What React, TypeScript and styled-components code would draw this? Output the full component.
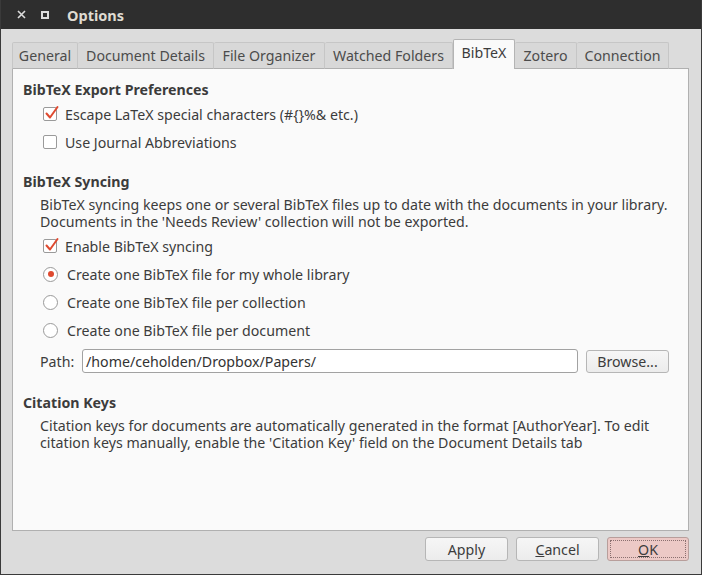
import React from "react";
import styled, { createGlobalStyle } from "styled-components";

const Global = createGlobalStyle`
  html, body { margin: 0; padding: 0; }
  body { font-family: "Noto Sans", "DejaVu Sans", sans-serif; font-size: 14.2px; color: #3c3c3c; }
  * { box-sizing: border-box; }
`;

const Frame = styled.div`
  width: 702px;
  height: 575px;
  display: flex;
  flex-direction: column;
  background: #dcdcdc;
  border-left: 1px solid #3a3a3a;
  border-right: 1px solid #3a3a3a;
  border-bottom: 1px solid #3a3a3a;
`;

const TitleBar = styled.div`
  height: 29px;
  flex: none;
  display: flex;
  align-items: center;
  background: #2e2e2e;
  color: #dfdbd2;
  padding-left: 15px;
`;

const WinButton = styled.div`
  width: 10px;
  height: 10px;
  display: flex;
  align-items: center;
  justify-content: center;
  margin-right: 14px;
`;

const Title = styled.div`
  font-weight: bold;
  font-size: 14.5px;
  margin-left: 3px;
`;

const Body = styled.div`
  flex: 1;
  display: flex;
  flex-direction: column;
  padding: 10px 12px 0 11px;
  min-height: 0;
`;

const TabBar = styled.div`
  display: flex;
  align-items: flex-end;
  height: 30px;
  margin-bottom: -1px;
  position: relative;
  z-index: 1;
`;

const Tab = styled.div<{ $w: number; $active?: boolean }>`
  width: ${(p) => p.$w}px;
  height: ${(p) => (p.$active ? 30 : 27)}px;
  display: flex;
  align-items: center;
  justify-content: center;
  white-space: nowrap;
  background: ${(p) => (p.$active ? "#fafafa" : "#d8d8d8")};
  border: 1px solid ${(p) => (p.$active ? "#b4b4b4" : "#c6c6c6")};
  border-bottom: ${(p) => (p.$active ? "none" : "1px solid #b0b0b0")};
  border-left: ${(p) => (p.$active ? "1px solid #b4b4b4" : "none")};
  border-radius: 2px 2px 0 0;
  color: ${(p) => (p.$active ? "#3c3c3c" : "#4c4c4c")};
  padding-bottom: ${(p) => (p.$active ? 4 : 1)}px;
  &:first-child { border-left: 1px solid #c6c6c6; }
`;

const Panel = styled.div`
  flex: 1;
  background: #fafafa;
  border: 1px solid #b0b0b0;
  padding: 11px 10px 0 10px;
  display: flex;
  flex-direction: column;
`;

const Heading = styled.div<{ $top?: number }>`
  font-weight: bold;
  line-height: 20px;
  margin-top: ${(p) => p.$top ?? 0}px;
`;

const Para = styled.div`
  margin: 4px 0 0 17px;
  line-height: 17px;
`;

const OptionRow = styled.label<{ $top?: number }>`
  height: 28px;
  display: flex;
  align-items: center;
  padding-left: 20px;
  gap: 8px;
  white-space: nowrap;
  margin-top: ${(p) => p.$top ?? 0}px;
`;

const Box = styled.span`
  width: 14px;
  height: 14px;
  border: 1px solid #9a9a9a;
  border-radius: 2px;
  background: #fff;
  position: relative;
  flex: none;
`;

const Check = styled.svg`
  position: absolute;
  left: 0px;
  top: -3px;
`;

const Radio = styled.span`
  width: 15px;
  height: 15px;
  border: 1px solid #9a9a9a;
  border-radius: 50%;
  background: #fff;
  display: flex;
  align-items: center;
  justify-content: center;
  flex: none;
  margin-right: 1px;
`;

const Dot = styled.span`
  width: 6px;
  height: 6px;
  border-radius: 50%;
  background: #df4a30;
`;

const PathRow = styled.div`
  display: flex;
  align-items: center;
  margin-top: 5px;
  padding-left: 17px;
  height: 24px;
`;

const PathLabel = styled.span`
  width: 42px;
  flex: none;
`;

const Input = styled.div`
  width: 496px;
  height: 24px;
  border: 1px solid #a2a2a2;
  border-radius: 3px;
  background: #fff;
  display: flex;
  align-items: center;
  padding-left: 3px;
  color: #333;
`;

const Button = styled.div<{ $w: number; $default?: boolean }>`
  width: ${(p) => p.$w}px;
  height: 24px;
  border: 1px solid ${(p) => (p.$default ? "#b89e9b" : "#b6b6b6")};
  border-radius: 3px;
  background: ${(p) =>
    p.$default ? "#ecc9c6" : "linear-gradient(#f6f6f6, #ececec)"};
  display: flex;
  align-items: center;
  justify-content: center;
  color: #3c3c3c;
  position: relative;
  flex: none;
`;

const Focus = styled.span`
  position: absolute;
  inset: 2px;
  border: 1px dotted #8a7070;
`;

const BrowseButton = styled(Button)`
  margin-left: 8px;
  height: 23px;
`;

const ButtonRow = styled.div`
  display: flex;
  justify-content: flex-end;
  gap: 8px;
  margin: 6px 0 13px;
  padding-right: 0px;
`;

const U = styled.span`
  text-decoration: underline;
`;

const CheckBox = ({ checked }: { checked?: boolean }) => (
  <Box>
    {checked && (
      <Check width="16" height="16" viewBox="0 0 16 16">
        <path d="M2.5 8.5 L6 12.5 L13.5 2" fill="none" stroke="#df4a30" strokeWidth="2" strokeLinecap="round" strokeLinejoin="round" />
      </Check>
    )}
  </Box>
);

const RadioButton = ({ checked }: { checked?: boolean }) => (
  <Radio>{checked && <Dot />}</Radio>
);

const tabs: [string, number][] = [
  ["General", 66],
  ["Document Details", 136],
  ["File Organizer", 111],
  ["Watched Folders", 128],
  ["BibTeX", 62],
  ["Zotero", 62],
  ["Connection", 92],
];

export default function App() {
  return (
    <>
      <Global />
      <Frame>
        <TitleBar>
          <WinButton>
            <svg width="9" height="9" viewBox="0 0 9 9">
              <path d="M1 1 L8 8 M8 1 L1 8" stroke="#dcdcdc" strokeWidth="1.6" />
            </svg>
          </WinButton>
          <WinButton>
            <svg width="8" height="8" viewBox="0 0 8 8">
              <rect x="1" y="1" width="6" height="6" fill="none" stroke="#dcdcdc" strokeWidth="2" />
            </svg>
          </WinButton>
          <Title>Options</Title>
        </TitleBar>
        <Body>
          <TabBar>
            {tabs.map(([t, w]) => (
              <Tab key={t} $w={w} $active={t === "BibTeX"}>
                {t}
              </Tab>
            ))}
          </TabBar>
          <Panel>
            <Heading>BibTeX Export Preferences</Heading>
            <OptionRow>
              <CheckBox checked />
              Escape LaTeX special characters (#{"{}"}%&amp; etc.)
            </OptionRow>
            <OptionRow>
              <CheckBox />
              Use Journal Abbreviations
            </OptionRow>
            <Heading $top={16}>BibTeX Syncing</Heading>
            <Para>
              BibTeX syncing keeps one or several BibTeX files up to date with the documents in your library.
              <br />
              Documents in the 'Needs Review' collection will not be exported.
            </Para>
            <OptionRow $top={2}>
              <CheckBox checked />
              Enable BibTeX syncing
            </OptionRow>
            <OptionRow>
              <RadioButton checked />
              Create one BibTeX file for my whole library
            </OptionRow>
            <OptionRow>
              <RadioButton />
              Create one BibTeX file per collection
            </OptionRow>
            <OptionRow>
              <RadioButton />
              Create one BibTeX file per document
            </OptionRow>
            <PathRow>
              <PathLabel>Path:</PathLabel>
              <Input>/home/ceholden/Dropbox/Papers/</Input>
              <BrowseButton $w={83}>Browse...</BrowseButton>
            </PathRow>
            <Heading $top={20}>Citation Keys</Heading>
            <Para>
              Citation keys for documents are automatically generated in the format [AuthorYear]. To edit
              <br />
              citation keys manually, enable the 'Citation Key' field on the Document Details tab
            </Para>
          </Panel>
          <ButtonRow>
            <Button $w={83}>Apply</Button>
            <Button $w={83}>
              <span>
                <U>C</U>ancel
              </span>
            </Button>
            <Button $w={82} $default>
              <Focus />
              <span>
                <U>O</U>K
              </span>
            </Button>
          </ButtonRow>
        </Body>
      </Frame>
    </>
  );
}
